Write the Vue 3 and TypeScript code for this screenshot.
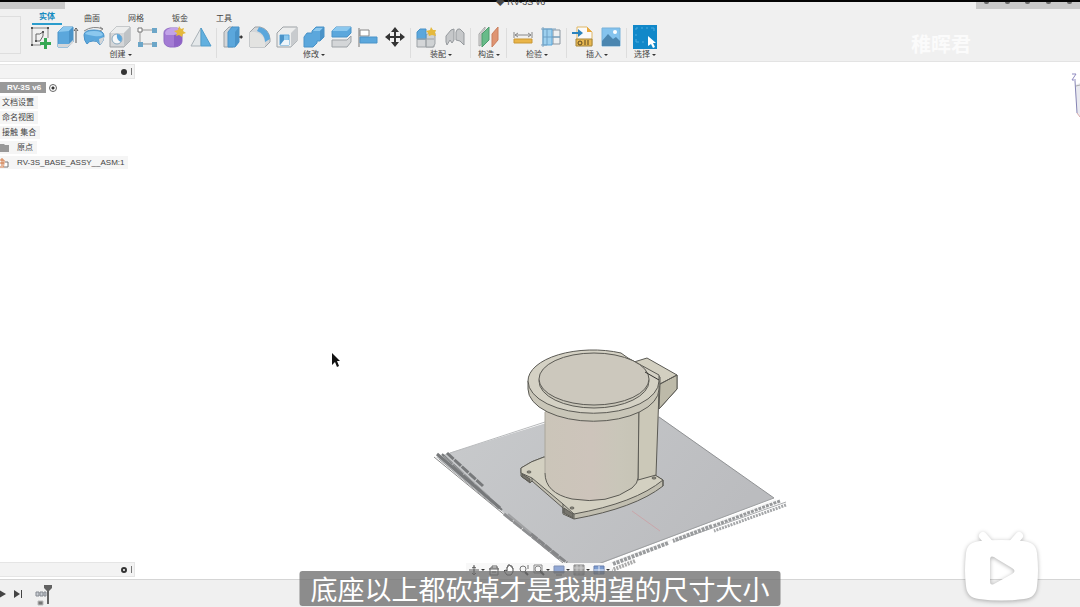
<script setup lang="ts">
interface Shape {
  d: string
  fill?: string
  stroke?: string
  width?: number
}
interface Tool {
  name: string
  shapes: Shape[]
}
interface Group {
  label: string
  tools: Tool[]
}

const blue = '#5ba7dc'
const light = '#8cc8ee'
const deep = '#4a93c8'
const grey = '#d4d6d8'
const pale = '#eceded'
const edge = '#9da2a6'

const tabs = ['实体', '曲面', '网格', '钣金', '工具']

const groups: Group[] = [
  {
    label: '创建',
    tools: [
      {
        name: '草图',
        shapes: [
          { d: 'M4 3H20V13M4 3V20H13', stroke: '#888' },
          { d: 'M8 16V9Q12 10 15 7V11L12 16Z', stroke: '#666' },
          { d: 'M3 2h2v2H3zM19 2h2v2h-2zM3 19h2v2H3zM14 6h2v2h-2zM7 15h2v2H7z', fill: '#555' },
          { d: 'M16 13h3v4h4v3h-4v4h-3v-4h-4v-3h4z', fill: '#35a853' }
        ]
      },
      {
        name: '拉伸',
        shapes: [
          { d: 'M3 7L8 2H18V17L13 22H3Z', fill: blue, stroke: deep },
          { d: 'M3 7L8 2H18L14 6Z', fill: light },
          { d: 'M14 6L18 2V17L14 21Z', fill: deep },
          { d: 'M3 19H14L18 15V18L13 22H3Z', fill: grey },
          { d: 'M21 5V18M19 6L21 3L23 6', stroke: '#555' }
        ]
      },
      {
        name: '旋转',
        shapes: [
          { d: 'M2 10Q2 5 12 5T22 11Q22 16 18 20Q15 15 11 16Q7 16 5 19Q2 16 2 10Z', fill: blue, stroke: deep },
          { d: 'M3 9Q4 6 12 6T21 10Q18 12 12 11T3 9Z', fill: light },
          { d: 'M17 14L22 12Q22 16 18 20Z', fill: grey },
          { d: 'M2 6Q11 0 21 4M18 2L21 4L18 6', stroke: '#888' }
        ]
      },
      {
        name: '孔',
        shapes: [
          { d: 'M2 8L8 2H22V16L16 22H2Z', fill: grey, stroke: edge },
          { d: 'M2 8L8 2H22L16 8Z', fill: pale },
          { d: 'M16 8L22 2V16L16 22Z', fill: '#bfc3c6' },
          { d: 'M4 14a5 5 0 1 0 10 0a5 5 0 1 0-10 0', fill: '#f5f7f8', stroke: '#8aa8bd' },
          { d: 'M9 9Q8 15 13 17A5 5 0 0 0 9 9', fill: blue }
        ]
      },
      {
        name: '阵列',
        shapes: [
          { d: 'M5 5H20M5 5V19M5 19H20', stroke: '#999' },
          { d: 'M3 3h4v4H3z', fill: '#fff', stroke: '#777' },
          { d: 'M17 3h5v5h-5zM3 17h5v5H3zM17 17h5v5h-5z', fill: '#6ca6c8' }
        ]
      },
      {
        name: '造型',
        shapes: [
          { d: 'M2 8Q2 4 8 3H15Q20 4 20 8V16Q20 21 13 22H8Q2 21 2 16Z', fill: '#a37bd4', stroke: '#8f6bc3' },
          { d: 'M3 8Q4 4 9 3H16L19 7Q16 10 12 10H4Z', fill: '#c2a3e8' },
          { d: 'M12 10Q19 9 20 8V16Q19 21 12 22Z', fill: '#8e62c6' },
          { d: 'M17 1L19 4L22 3L21 6L24 8L21 9L20 12L17 10L14 11L15 8L12 6L16 5Z', fill: '#e5b93d' }
        ]
      },
      {
        name: '镜像',
        shapes: [
          { d: 'M12 3V21H2Z', fill: '#e4e8ea', stroke: '#a9b2b8' },
          { d: 'M12 3V21H22Z', fill: '#62b0df', stroke: '#4f9dcc' }
        ]
      }
    ]
  },
  {
    label: '修改',
    tools: [
      {
        name: '推拉',
        shapes: [
          { d: 'M3 7L8 2H12V22H3Z', fill: grey, stroke: edge },
          { d: 'M7 7L11 2H18V17L14 22H7Z', fill: blue, stroke: deep },
          { d: 'M14 7L18 2V17L14 22Z', fill: deep },
          { d: 'M18 12H21', stroke: '#333' },
          { d: 'M20 10L22 12L20 14L19 12Z', fill: '#333' }
        ]
      },
      {
        name: '圆角',
        shapes: [
          { d: 'M2 7L7 2H12Q21 4 22 14V17L17 22H2Z', fill: grey, stroke: edge },
          { d: 'M11 2Q21 4 22 14L17 17Q17 9 9 6Z', fill: blue },
          { d: 'M2 7H7Q16 9 17 18V22H2Z', fill: '#e3e3e1' }
        ]
      },
      {
        name: '抽壳',
        shapes: [
          { d: 'M2 8L8 2H22V16L16 22H2Z', fill: pale, stroke: edge },
          { d: 'M16 8L22 2V16L16 22Z', fill: '#c8cbce' },
          { d: 'M5 10H14V20H5Z', fill: light, stroke: blue },
          { d: 'M5 20L9 15H14V20Z', fill: '#eef5fa' },
          { d: 'M5 10L9 10V15L5 20Z', fill: deep }
        ]
      },
      {
        name: '合并',
        shapes: [
          { d: 'M2 12L5 8H10V6L14 2H22V12L18 16H15V18L11 22H2Z', fill: blue, stroke: deep },
          { d: 'M11 6L14 3H21L18 6Z', fill: light },
          { d: 'M18 6L22 2V12L18 16Z', fill: deep }
        ]
      },
      {
        name: '分割',
        shapes: [
          { d: 'M3 6L7 2H22V8L18 12H3Z', fill: blue, stroke: deep },
          { d: 'M3 6L7 2H22L18 6Z', fill: light },
          { d: 'M3 15H18L22 11V17L18 22H3Z', fill: grey, stroke: edge }
        ]
      },
      {
        name: '对齐',
        shapes: [
          { d: 'M3 3V22', stroke: '#777' },
          { d: 'M4 5H13V11H4Z', fill: '#fff', stroke: '#888' },
          { d: 'M4 12H21V18H4Z', fill: blue, stroke: deep }
        ]
      },
      {
        name: '移动',
        shapes: [
          { d: 'M12 5V19M5 12H19', stroke: '#333', width: 2 },
          { d: 'M12 2L16 7H8ZM12 22L16 17H8ZM2 12L7 8V16ZM22 12L17 8V16Z', fill: '#333' }
        ]
      }
    ]
  },
  {
    label: '装配',
    tools: [
      {
        name: '新建零部件',
        shapes: [
          { d: 'M2 14H19V22H2Z', fill: grey, stroke: edge },
          { d: 'M11 10L14 8H20V19L18 22H11Z', fill: '#cfd2d4', stroke: edge },
          { d: 'M2 7L5 4H11V14H2Z', fill: blue, stroke: deep },
          { d: 'M2 14H19M11 14V22', stroke: edge },
          { d: 'M16 2L18 5L21 5L20 8L21 11L17 10L14 11L13 8L11 6L15 5Z', fill: '#e5b93d' }
        ]
      },
      {
        name: '联接',
        shapes: [
          { d: 'M3 11L8 5L11 4V15L9 18L7 15L4 20L3 17Z', fill: '#c6c8ca', stroke: '#95999d' },
          { d: 'M13 7Q14 3 17 4L21 8V20L17 16L13 15Z', fill: '#c6c8ca', stroke: '#95999d' }
        ]
      }
    ]
  },
  {
    label: '构造',
    tools: [
      {
        name: '偏移平面',
        shapes: [
          { d: 'M2 9L8 2V4L4 9V20L2 21Z', fill: '#dedede', stroke: '#a6a6a6' },
          { d: 'M5 9L12 2V15L5 22Z', fill: '#67bb89', stroke: '#4c9c6d' },
          { d: 'M15 9L21 2V15L15 22Z', fill: '#df9472', stroke: '#cb7e5c' }
        ]
      }
    ]
  },
  {
    label: '检验',
    tools: [
      {
        name: '测量',
        shapes: [
          { d: 'M3 7V13M21 7V13M4 10H20M7 8L4 10L7 12M17 8L20 10L17 12', stroke: '#888' },
          { d: 'M3 14H21V18H3Z', fill: '#eab548', stroke: '#c99734' }
        ]
      },
      {
        name: '截面分析',
        shapes: [
          { d: 'M6 5H21V19H6ZM14 5V19M6 12H21', fill: '#eef0f2', stroke: '#8b96a0' },
          { d: 'M4 4H13V20H4Z', fill: '#9ed0ee', stroke: blue },
          { d: 'M4 2V22M2 4H17M2 20H8', stroke: '#7da3c0' },
          { d: 'M8 4V20M4 12H21', stroke: '#6da0c6' }
        ]
      }
    ]
  },
  {
    label: '插入',
    tools: [
      {
        name: '插入衍生',
        shapes: [
          { d: 'M6 2H16L21 7V20H6Z', fill: '#fafafa', stroke: '#e0b765' },
          { d: 'M16 2V7H21Z', fill: '#e9a83c' },
          { d: 'M1 7H7V4L12 8L7 12V9H1Z', fill: '#2b83bd' },
          { d: 'M5 14H21V21H5Z', fill: '#e8b850', stroke: '#a5853c' },
          { d: 'M7 18a2 2 0 1 0 4 0a2 2 0 1 0-4 0M14 15V20M17 15V20', stroke: '#5b4721' }
        ]
      },
      {
        name: '画布',
        shapes: [
          { d: 'M3 3H21V21H3Z', fill: '#84c3ee', stroke: '#78b2d9' },
          { d: 'M3 16L9 9L14 14L17 12L21 16V21H3Z', fill: '#4b86b0' },
          { d: 'M14 7a2 2 0 1 0 4 0a2 2 0 1 0-4 0', fill: '#fff' }
        ]
      }
    ]
  },
  {
    label: '选择',
    tools: [
      {
        name: '选择',
        shapes: [
          { d: 'M0 0H24V24H0Z', fill: '#1188c9' },
          { d: 'M3 5V3H5M8 3H10M13 3H15M18 3H21V6M3 9V11M3 14V17H6M9 17H11', stroke: '#4fabde' },
          { d: 'M15 11L23 18H20L22 22L20 23L18 19L15 21Z', fill: '#fff' }
        ]
      }
    ]
  }
]

const rows = ['文档设置', '命名视图', '接触 集合']

const navTools: Tool[] = [
  { name: '动态观察', shapes: [{ d: 'M6 1V11M1 6H11M4 9L6 11L8 9M4 4Q6 2 8 4', stroke: '#555' }] },
  { name: '观察方向', shapes: [{ d: 'M2 4H10V11H2ZM1 5H11M4 4V2H9V4M4 8H8', stroke: '#666' }] },
  { name: '平移', shapes: [{ d: 'M4 11L1 7L2 6L4 7V3H5V1H7V2H9V4H10V8L8 11Z', fill: '#fff', stroke: '#444' }] },
  { name: '缩放', shapes: [{ d: 'M2 5a3 3 0 1 0 6 0a3 3 0 1 0-6 0M10 1V5', stroke: '#777' }, { d: 'M7 8L10 11', stroke: '#333', width: 2 }] },
  { name: '窗口缩放', shapes: [{ d: 'M2 5a3 3 0 1 0 6 0a3 3 0 1 0-6 0M1 1H9V9H1Z', stroke: '#888' }, { d: 'M7 7L11 11', stroke: '#333', width: 2 }] },
  { name: '显示设置', shapes: [{ d: 'M1 2H11V9H1Z', fill: '#91a8d5', stroke: '#8090b4' }, { d: 'M3 11H9', stroke: '#666' }] },
  { name: '栅格', shapes: [{ d: 'M1 1H11V11H1Z', fill: '#aaa', stroke: '#888' }, { d: 'M4 1V11M8 1V11M1 4H11M1 8H11', stroke: '#ccc' }] },
  { name: '视口', shapes: [{ d: 'M1 2H11V10H1Z', fill: '#7c9cd0', stroke: '#667dab' }, { d: 'M6 2V10M1 6H11', stroke: '#e6ecf7' }] }
]
const withMenu = ['动态观察', '窗口缩放', '显示设置', '栅格', '视口']
</script>

<template>
  <div class="app">
    <header class="top">
      <div class="titlebar">
        <span class="file-tab"></span>
        <span class="title">◆ RV-3S v6</span>
        <span class="window-tab"><i v-for="n in 5" :key="n"></i></span>
      </div>
      <div class="ribbon">
        <button class="workspace" aria-label="工作空间"></button>
        <div class="ribbon-main">
          <nav class="tabs">
            <button v-for="(tab, i) in tabs" :key="tab" class="tab" :class="{ active: i === 0 }">{{ tab }}</button>
          </nav>
          <div class="groups">
            <section v-for="group in groups" :key="group.label" class="group">
              <div class="tools">
                <button v-for="tool in group.tools" :key="tool.name" class="tool" :aria-label="tool.name">
                  <svg viewBox="0 0 24 24">
                    <path
                      v-for="(s, k) in tool.shapes"
                      :key="k"
                      :d="s.d"
                      :fill="s.fill ?? 'none'"
                      :stroke="s.stroke ?? 'none'"
                      :stroke-width="s.width ?? 1"
                    />
                  </svg>
                </button>
              </div>
              <button class="group-label">{{ group.label }}<span class="caret"></span></button>
            </section>
          </div>
        </div>
        <div class="watermark">稚晖君</div>
      </div>
    </header>

    <main class="canvas">
      <aside class="browser">
        <div class="panel-bar"><span class="dot"></span><span class="grip"></span></div>
        <ul class="tree">
          <li><span class="root">RV-3S v6</span><span class="radio"></span></li>
          <li v-for="row in rows" :key="row"><span class="item">{{ row }}</span></li>
          <li>
            <span class="item with-icon">
              <svg class="row-icon" viewBox="0 0 10 10"><path d="M0 1H4L5 2H9V9H0Z" fill="#999" /></svg>原点
            </span>
          </li>
          <li>
            <span class="item with-icon">
              <svg class="row-icon" viewBox="0 0 10 10">
                <path d="M0 2H4V5H0M4 5V9H0M2 0V8" fill="none" stroke="#d27845" />
                <path d="M5 4L8 4V9H4" fill="#fff" stroke="#777" />
              </svg>RV-3S_BASE_ASSY__ASM:1
            </span>
          </li>
        </ul>
      </aside>

      <svg class="model" viewBox="430 340 360 230">
        <defs>
          <linearGradient id="ground" x1="0" y1="0" x2="1" y2="0.4">
            <stop offset="0" stop-color="#c9cbcd" />
            <stop offset="1" stop-color="#bbbcbf" />
          </linearGradient>
          <linearGradient id="body" x1="0" y1="0" x2="1" y2="0">
            <stop offset="0" stop-color="#cbc5b9" />
            <stop offset="0.5" stop-color="#cdc4bb" />
            <stop offset="0.8" stop-color="#c9c6b9" />
            <stop offset="1" stop-color="#c7c4b6" />
          </linearGradient>
        </defs>
        <path d="M436 456L631 396L774 497L592 566L563 561Z" fill="url(#ground)" />
        <path d="M659 416L774 497" stroke="#909294" />
        <path d="M450 452L545 421" stroke="#b8babc" />
        <path d="M434 456L563 562" stroke="#888" />
        <g fill="none" stroke="#77797b">
          <path d="M437 453L500 507" stroke-width="3" />
          <path d="M442 453L502 509" stroke-width="2" stroke-dasharray="14 1" />
          <path d="M447 452L483 485" stroke-width="3" stroke-dasharray="9 1" />
          <path d="M439 458L498 508" stroke="#a2a4a6" />
          <path d="M444 455L490 496" stroke="#9fa1a3" />
          <path d="M504 513L560 558" stroke="#8e8f91" stroke-width="3" stroke-dasharray="11 1" />
          <path d="M508 513L563 559" stroke="#a0a1a3" stroke-width="2" />
          <path d="M531 533L567 562" stroke="#858688" stroke-width="3" stroke-dasharray="8 1" />
        </g>
        <g fill="none">
          <path d="M774 497L590 566" stroke="#9d9fa1" />
          <path d="M776 499L600 566" stroke="#f6f6f6" stroke-width="2" />
          <path d="M786 501L673 541" stroke="#aaacae" />
          <path d="M780 500L713 525" stroke="#97999b" stroke-width="3" stroke-dasharray="3 1" />
          <path d="M786 504L714 530" stroke="#a5a7a9" stroke-width="3" stroke-dasharray="2 1" />
          <path d="M712 525L673 540" stroke="#9a9c9e" stroke-width="4" stroke-dasharray="3 1" />
          <path d="M668 542L613 563" stroke="#9a9c9e" stroke-width="4" stroke-dasharray="3 1" />
          <path d="M635 560L612 569" stroke="#aaa" stroke-width="4" stroke-dasharray="2 1" />
        </g>
        <path d="M632 510L660 530" stroke="#c9a6aa" />

        <g stroke="#5b5a54" stroke-linejoin="round">
          <path d="M521 467Q531 460 544 456L655 474L663 479V485Q635 507 574 518L563 513V507L532 480L530 482L521 475Z" fill="#c1beb0" />
          <path d="M521 467Q531 460 544 456L640 471L655 474L663 479Q635 502 574 513L563 503L532 477L521 472Z" fill="#d3d0c1" />
          <path d="M574 513V518M563 503V512M532 477V481M663 479V485" fill="none" />
          <path d="M522 473L530 478V481L522 476ZM564 507L573 513V517L564 512Z" fill="#77756d" />
          <ellipse cx="529" cy="471" rx="2" ry="1" fill="#aaa798" />
          <ellipse cx="572" cy="507" rx="2" ry="1" fill="#aaa798" />
          <ellipse cx="654" cy="477" rx="2" ry="1" fill="#aaa798" />
          <path d="M638 405L659 390L656 474L638 479Z" fill="#cbc8b8" />
          <path d="M545 400V472Q545 492 572 498Q608 504 632 487Q638 482 638 477V400Z" fill="url(#body)" stroke="none" />
          <path d="M545 472Q545 492 572 498Q608 504 632 487Q638 482 638 477L639 410" fill="none" />
          <path d="M545 411V472" stroke="#aaa69b" fill="none" />
          <path d="M625 364L634 361L647 357L677 374V388L659 408V385Z" fill="#d2cfc0" />
          <path d="M660 383L677 374V388L659 408Z" fill="#bdbaa9" />
          <path d="M634 361L660 376V383L677 374" fill="none" />
          <path d="M528 380V388A65 32 0 0 0 659 388V380Z" fill="#c9c6b8" />
          <path d="M528 380A65 31 0 0 1 621 352L628 357L659 374V380A65 32 0 0 1 528 380Z" fill="#d4d1c4" />
          <ellipse cx="594" cy="380" rx="55" ry="27" fill="#c9c6b9" />
          <ellipse cx="594" cy="378" rx="55" ry="26" fill="#ccc8bd" />
          <path d="M645 371L659 379" stroke="#33322f" />
        </g>
      </svg>

      <svg class="cursor" viewBox="0 0 10 16">
        <path d="M1 1V13L4 10L6 15L8 14L6 9H9Z" fill="#111" />
      </svg>

      <svg class="view-cube" viewBox="0 0 9 50">
        <path d="M1 3H5L1 9H5" fill="none" stroke="#8f8bc0" />
        <path d="M4 14L9 12V46L6 42Z" fill="#e9e9ef" />
        <path d="M4 10L6 42" stroke="#8584b4" />
        <path d="M6 42L9 46" stroke="#d8aaaa" />
        <path d="M5 15L9 14" stroke="#aaa" />
      </svg>

      <div class="comments panel-bar"><span class="dot hollow"></span><span class="grip"></span></div>

      <div class="navbar">
        <button v-for="tool in navTools" :key="tool.name" class="nav-tool" :aria-label="tool.name">
          <svg viewBox="0 0 12 12">
            <path
              v-for="(s, k) in tool.shapes"
              :key="k"
              :d="s.d"
              :fill="s.fill ?? 'none'"
              :stroke="s.stroke ?? 'none'"
              :stroke-width="s.width ?? 1"
            />
          </svg>
          <span v-if="withMenu.includes(tool.name)" class="caret"></span>
        </button>
      </div>
    </main>

    <footer class="timeline">
      <button class="step" aria-label="播放"><svg viewBox="0 0 10 10"><path d="M1 1L8 5L1 9Z" fill="#444" /></svg></button>
      <button class="step" aria-label="末尾"><svg viewBox="0 0 10 10"><path d="M1 1L7 5L1 9ZM8 1H9V9H8Z" fill="#444" /></svg></button>
      <svg class="marker" viewBox="0 0 18 22">
        <path d="M1 8h3v4H1zM5 8h3v4H5zM9 8h2v4H9z" fill="#c8ccd2" stroke="#858a91" />
        <path d="M3 17H8V21H3Z" fill="#777" stroke="#bbb" />
        <path d="M9 1H17V4L14 7H12L9 4ZM12 6H14V20H12Z" fill="#626262" />
      </svg>
    </footer>

    <div class="subtitle">底座以上都砍掉才是我期望的尺寸大小</div>

    <svg class="player-logo" viewBox="0 0 88 84">
      <path
        d="M25 13L31 20M61 13L55 20"
        fill="none"
        stroke="#fff"
        stroke-width="8"
        stroke-linecap="round"
      />
      <path
        fill-rule="evenodd"
        d="M22 18Q43 16 65 18Q78 19 79 30Q81 48 79 63Q78 75 66 76Q43 79 21 76Q9 75 8 63Q6 48 8 30Q9 19 22 18ZM36 34Q32 32 32 37V58Q32 63 36 61L54 51Q59 48 54 45L39 36Z"
        fill="#fff"
      />
    </svg>
  </div>
</template>

<style>
body {
  margin: 0;
}
</style>

<style scoped>
.app {
  position: relative;
  display: flex;
  flex-direction: column;
  height: 100vh;
  overflow: hidden;
  background: #fff;
  color: #444;
  font-family: "Liberation Sans", "Noto Sans CJK SC", sans-serif;
  font-size: 8px;
}
button {
  padding: 0;
  border: 0;
  background: none;
  color: inherit;
  font: inherit;
}
svg {
  display: block;
}
.top {
  flex: none;
  border-top: 2px solid #050505;
  border-bottom: 1px solid #e3e3e3;
  background: #f0f0f0;
}
.titlebar {
  display: flex;
  justify-content: space-between;
  height: 7px;
}
.file-tab {
  width: 65px;
  background: #c9c9c9;
}
.title {
  font-size: 9px;
  line-height: 1px;
}
.window-tab {
  display: flex;
  justify-content: space-around;
  width: 104px;
  background: #c9c9c9;
}
.window-tab i {
  width: 5px;
  height: 2px;
  border-radius: 0 0 3px 3px;
  background: #666;
}
.ribbon {
  display: flex;
  height: 52px;
}
.workspace {
  width: 21px;
  height: 38px;
  margin: 7px 3px 0 0;
  border: 1px solid #dedede;
  border-left: 0;
}
.tabs {
  display: flex;
  height: 16px;
}
.tab {
  display: flex;
  align-items: flex-end;
  justify-content: center;
  width: 44px;
  line-height: 12px;
}
.tab.active {
  box-sizing: border-box;
  width: 30px;
  margin: 0 8px;
  border-bottom: 2px solid #2b9ccc;
  color: #168bc0;
  font-weight: bold;
}
.groups {
  display: grid;
  grid-template-columns: 193px 194px 60px 36px 60px 60px 36px;
}
.group {
  height: 36px;
  padding: 0 4px;
  background: linear-gradient(#ddd, #ddd) right center / 1px 30px no-repeat;
}
.group:last-child {
  background: none;
}
.tools {
  display: flex;
  justify-content: space-between;
}
.tool {
  width: 24px;
  height: 24px;
}
.group:nth-child(4) .tools,
.group:last-child .tools {
  justify-content: center;
}
.group-label {
  display: flex;
  align-items: center;
  justify-content: center;
  gap: 2px;
  width: 100%;
  line-height: 12px;
  white-space: nowrap;
}
.caret {
  flex: none;
  border: 2px solid transparent;
  border-top-color: #333;
  border-bottom-width: 0;
}
.watermark {
  margin: 24px 109px 0 auto;
  color: #fbfbfb;
  font-size: 20px;
  font-weight: bold;
  line-height: 24px;
}
.canvas {
  position: relative;
  flex: 1;
  min-height: 0;
}
.browser {
  width: 135px;
  padding-top: 2px;
}
.panel-bar {
  display: flex;
  align-items: center;
  justify-content: flex-end;
  gap: 4px;
  box-sizing: border-box;
  width: 135px;
  height: 15px;
  padding-right: 2px;
  border: 1px solid #e5e5e5;
  border-left: 0;
  background: #f3f3f3;
}
.dot {
  box-sizing: border-box;
  width: 6px;
  height: 6px;
  border-radius: 50%;
  background: #333;
}
.dot.hollow {
  border: 2px solid #333;
  background: #fff;
}
.grip {
  width: 1px;
  height: 7px;
  background: #777;
}
.tree {
  margin: 1px 0 0;
  padding: 0;
  list-style: none;
}
.tree li {
  display: flex;
  align-items: center;
  height: 15px;
  white-space: nowrap;
}
.root {
  padding: 0 5px 0 7px;
  background: #999;
  color: #fff;
  font-weight: bold;
  line-height: 11px;
}
.radio {
  box-sizing: border-box;
  width: 8px;
  height: 8px;
  margin-left: 3px;
  border: 1px solid #666;
  border-radius: 50%;
  background: radial-gradient(#333 0 1px, #fff 2px);
}
.item {
  padding: 0 4px 0 2px;
  background: #f5f5f5;
  line-height: 13px;
}
.with-icon {
  display: flex;
  align-items: center;
  gap: 7px;
  padding-left: 0;
}
.row-icon {
  width: 10px;
  height: 10px;
}
.model {
  position: absolute;
  bottom: 8px;
  left: 430px;
  width: 360px;
  height: 230px;
}
.cursor {
  position: absolute;
  top: 290px;
  left: 331px;
  width: 10px;
  height: 16px;
}
.view-cube {
  position: absolute;
  top: 9px;
  right: 0;
  width: 9px;
  height: 50px;
}
.comments {
  position: absolute;
  bottom: 2px;
  left: 0;
}
.navbar {
  position: absolute;
  bottom: 2px;
  left: 466px;
  display: flex;
  gap: 3px;
  padding: 1px 2px;
  background: #f8f8f8;
}
.nav-tool {
  display: flex;
  align-items: center;
  gap: 1px;
}
.nav-tool svg {
  width: 12px;
  height: 12px;
}
.timeline {
  display: flex;
  flex: none;
  align-items: center;
  gap: 5px;
  box-sizing: border-box;
  height: 28px;
  border-top: 1px solid #d5d5d5;
  background: #f0f0f0;
}
.step svg {
  width: 10px;
  height: 10px;
}
.step:first-child {
  margin-left: -2px;
}
.marker {
  width: 18px;
  height: 22px;
  margin: 3px 0 0 7px;
}
.subtitle {
  position: absolute;
  bottom: 1px;
  left: 50%;
  padding: 0 11px;
  border-radius: 3px;
  background: rgba(112, 112, 112, 0.78);
  color: #fff;
  font-family: "Noto Sans CJK SC", sans-serif;
  font-size: 27px;
  line-height: 35px;
  white-space: nowrap;
  transform: translateX(-50%);
}
.player-logo {
  position: absolute;
  right: 34px;
  bottom: 0;
  width: 88px;
  height: 84px;
  filter: drop-shadow(0 1px 2px rgba(0, 0, 0, 0.3));
}
</style>
